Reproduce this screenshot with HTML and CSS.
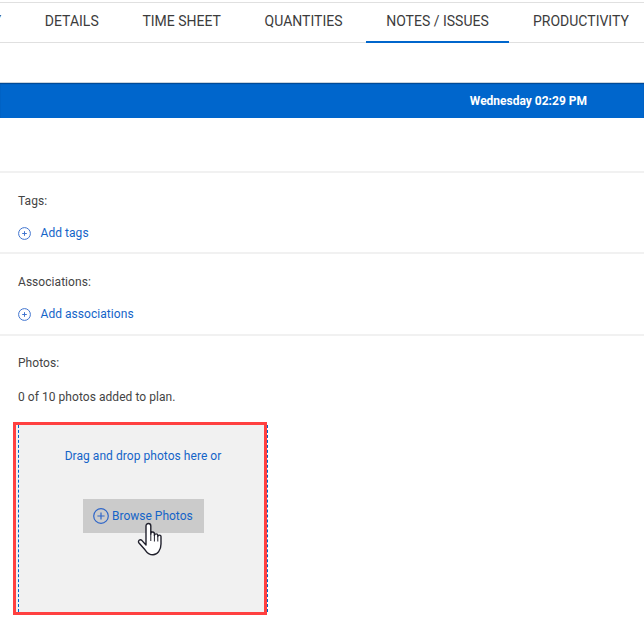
FILE: index.html
```html
<!DOCTYPE html>
<html lang="en">
<head>
<meta charset="utf-8">
<title>Notes / Issues</title>
<link rel="stylesheet" href="styles.css">
</head>
<body>
<nav class="tabs">
  <a class="tab">SUMMARY</a>
  <a class="tab">DETAILS</a>
  <a class="tab">TIME SHEET</a>
  <a class="tab">QUANTITIES</a>
  <a class="tab active">NOTES / ISSUES</a>
  <a class="tab last">PRODUCTIVITY</a>
</nav>
<div class="bar"><span class="bar-time">Wednesday 02:29 PM</span></div>
<section class="section first">
  <div class="label">Tags:</div>
  <a class="add">
    <svg class="plus" viewBox="0 0 13 13"><circle cx="6.5" cy="6.5" r="5.9"/><path d="M6.500 4.200v4.600M4.200 6.500h4.600"/></svg>
    Add tags
  </a>
</section>
<section class="section">
  <div class="label">Associations:</div>
  <a class="add">
    <svg class="plus" viewBox="0 0 13 13"><circle cx="6.5" cy="6.5" r="5.9"/><path d="M6.500 4.200v4.600M4.200 6.500h4.600"/></svg>
    Add associations
  </a>
</section>
<section class="section photos">
  <div class="label">Photos:</div>
  <p class="count">0 of 10 photos added to plan.</p>
  <div class="drop">
    <div class="drop-inner">
      <p class="drop-text">Drag and drop photos here or</p>
      <button class="browse">
        <svg class="plus big" viewBox="0 0 16 16"><circle cx="8" cy="8" r="7.300"/><path d="M8 4.400v7.200M4.400 8h7.200"/></svg>
        Browse Photos
      </button>
    </div>
    <svg class="cursor" viewBox="0 0 26 34">
      <path d="M9 4c0-1.500 1-2.500 2.400-2.500s2.400 1 2.400 2.500v8c0-1.200.8-2 1.800-2s1.800.8 1.800 2v1.500c0-1 .8-1.600 1.700-1.600s1.700.6 1.700 1.600v1c0-.9.8-1.400 1.600-1.400s1.600.6 1.600 1.500V22c0 6-3.500 10.800-8 10.800-4 0-6-2-8-5L2 21c-.8-1-.6-2.200.2-2.800.9-.6 2-.4 2.800.4L9 23z"/>
      <path class="fingers" d="M13.800 12v7M17.400 13.500v6M20.800 14.500v5"/>
    </svg>
  </div>
</section>
</body>
</html>
```
FILE: styles.css
```css
* { box-sizing: border-box; }
html, body { margin: 0; padding: 0; }
body {
  width: 644px;
  height: 629px;
  overflow: hidden;
  background: #fff;
  font-family: Roboto, "Liberation Sans", sans-serif;
  font-size: 12px;
  letter-spacing: .05px;
  color: #444;
}
.tabs {
  display: flex;
  gap: 3.7px;
  width: 760px;
  height: 41px;
  margin: 2px 0 0 -86.7px;
  border-top: 1px solid #e0e0e0;
  border-bottom: 1px solid #e0e0e0;
}
.tab {
  flex: none;
  height: 40px;
  padding: 0 20px;
  line-height: 36px;
  font-size: 14px;
  letter-spacing: 0;
  color: #3c3c3c;
  white-space: nowrap;
}
.tab.active { border-bottom: 2px solid #0066cc; }
.tab.last { margin-left: .6px; }
.bar {
  display: flex;
  align-items: center;
  justify-content: flex-end;
  height: 36px;
  margin-top: 39px;
  padding-right: 57px;
  background: #0066cc;
  border-top: 1px solid #c9d3dc;
  box-shadow: inset 0 1px 1px rgba(0, 40, 90, .5);
}
.bar-time { color: #fff; font-weight: 700; letter-spacing: 0; }
.section {
  height: 82px;
  padding: 0 18px;
  border-bottom: 2px solid #f1f1f1;
}
.section.first {
  height: 83px;
  margin-top: 53px;
  border-top: 2px solid #f1f1f1;
}
.label { padding-top: 20px; line-height: 16px; }
.add {
  display: flex;
  align-items: center;
  gap: 9.5px;
  margin-top: 16px;
  line-height: 16px;
  color: #1464c8;
}
.plus {
  flex: none;
  width: 13px;
  height: 13px;
  fill: none;
  stroke: #3f74cf;
  stroke-width: 1;
}
.photos { height: auto; border: 0; }
.photos .label { padding-top: 19px; }
.count { margin: 18px 0 0; line-height: 16px; }
.drop {
  position: relative;
  width: 254px;
  height: 193px;
  margin: 17px 0 0 -5px;
  border: 3px solid #ff4040;
  background: #f1f1f1;
}
.drop-inner {
  height: 100%;
  margin: 0 -4px 0 2px;
  padding-top: 23px;
  border-left: 1px dashed #0066cc;
  border-right: 1px dashed #0066cc;
  text-align: center;
}
.drop-text { margin: 0; line-height: 16px; color: #1464c8; }
.browse {
  display: inline-flex;
  align-items: center;
  gap: 3.5px;
  width: 121px;
  height: 34px;
  margin: 35px 0 0;
  padding: 0 0 0 10px;
  border: 0;
  background: #cbcbcb;
  color: #1464c8;
  font: inherit;
}
.plus.big { width: 16px; height: 16px; stroke: #2f66c8; stroke-width: 1.2; }
.cursor {
  position: absolute;
  left: 121px;
  top: 97px;
  width: 26px;
  height: 34px;
  fill: #fff;
  stroke: #20202c;
  stroke-width: 1.4;
  stroke-linejoin: round;
}
.fingers { fill: none; stroke-width: 1; }
```
